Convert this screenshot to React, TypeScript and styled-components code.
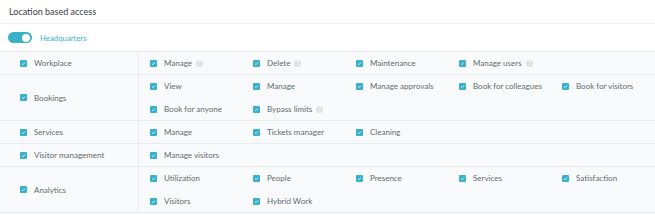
import React from "react";
import styled, { createGlobalStyle } from "styled-components";

const Global = createGlobalStyle`
  html, body { margin: 0; padding: 0; background: #ffffff; }
  body { font-family: Lato, "Open Sans", sans-serif; -webkit-font-smoothing: antialiased; }
`;

const Page = styled.div`
  width: 655px;
  height: 215px;
  overflow: hidden;
  background: #ffffff;
`;

const Header = styled.div`
  height: 23px;
  display: flex;
  align-items: center;
  padding-left: 9px;
  border-bottom: 1px solid #edf1f3;
  font-size: 9px;
  color: #3a4045;
`;

const ToggleRow = styled.div`
  height: 27px;
  display: flex;
  align-items: center;
  gap: 8px;
  padding-left: 8px;
  border-bottom: 1px solid #e6ebee;
`;

const Toggle = styled.div<{ $on: boolean }>`
  position: relative;
  width: 24px;
  height: 11px;
  border-radius: 6px;
  background: ${(p) => (p.$on ? "#3ab0c9" : "#c9d2d7")};
  &::after {
    content: "";
    position: absolute;
    top: 1.5px;
    ${(p) => (p.$on ? "right: 2px;" : "left: 2px;")}
    width: 8px;
    height: 8px;
    border-radius: 50%;
    background: #ffffff;
  }
`;

const LocationName = styled.span`
  font-size: 7.8px;
  color: #44b3cb;
`;

const Table = styled.div`
  background: #f8fafb;
`;

const Row = styled.div`
  display: grid;
  grid-template-columns: 139px 1fr;
  border-bottom: 1px solid #e6ebee;
`;

const GroupCell = styled.div`
  display: flex;
  align-items: center;
  padding-left: 20px;
  border-right: 1px solid #e6ebee;
`;

const ItemsCell = styled.div`
  display: grid;
  grid-template-columns: repeat(5, 103px);
  grid-auto-rows: 22px;
  row-gap: 1px;
  padding-left: 11px;
`;

const Item = styled.div`
  display: flex;
  align-items: center;
`;

const Box = styled.span`
  width: 7px;
  height: 7px;
  border-radius: 1px;
  background: #3ab0c9;
  display: inline-flex;
  align-items: center;
  justify-content: center;
  flex: none;
`;

const Label = styled.span`
  margin-left: 7px;
  font-size: 8px;
  color: #646b70;
  white-space: nowrap;
`;

const Help = styled.span`
  margin-left: 4px;
  width: 7px;
  height: 7px;
  border-radius: 50%;
  background: #dce1e4;
  color: #ffffff;
  font-size: 5px;
  font-weight: 700;
  display: inline-flex;
  align-items: center;
  justify-content: center;
  flex: none;
`;

const Check = () => (
  <Box>
    <svg width="5" height="5" viewBox="0 0 10 10">
      <path d="M2 5.2 L4.2 7.3 L8.2 2.8" fill="none" stroke="#ffffff" strokeWidth="1.4" />
    </svg>
  </Box>
);

type Perm = { label: string; help?: boolean };

const CheckItem = ({ label, help }: Perm) => (
  <Item>
    <Check />
    <Label>{label}</Label>
    {help && <Help>?</Help>}
  </Item>
);

const groups: { name: string; perms: Perm[] }[] = [
  {
    name: "Workplace",
    perms: [
      { label: "Manage", help: true },
      { label: "Delete", help: true },
      { label: "Maintenance" },
      { label: "Manage users", help: true },
    ],
  },
  {
    name: "Bookings",
    perms: [
      { label: "View" },
      { label: "Manage" },
      { label: "Manage approvals" },
      { label: "Book for colleagues" },
      { label: "Book for visitors" },
      { label: "Book for anyone" },
      { label: "Bypass limits", help: true },
    ],
  },
  {
    name: "Services",
    perms: [{ label: "Manage" }, { label: "Tickets manager" }, { label: "Cleaning" }],
  },
  { name: "Visitor management", perms: [{ label: "Manage visitors" }] },
  {
    name: "Analytics",
    perms: [
      { label: "Utilization" },
      { label: "People" },
      { label: "Presence" },
      { label: "Services" },
      { label: "Satisfaction" },
      { label: "Visitors" },
      { label: "Hybrid Work" },
    ],
  },
];

export default function App() {
  return (
    <Page>
      <Global />
      <Header>Location based access</Header>
      <ToggleRow>
        <Toggle $on />
        <LocationName>Headquarters</LocationName>
      </ToggleRow>
      <Table>
        {groups.map((g) => (
          <Row key={g.name}>
            <GroupCell>
              <CheckItem label={g.name} />
            </GroupCell>
            <ItemsCell>
              {g.perms.map((p) => (
                <CheckItem key={p.label} {...p} />
              ))}
            </ItemsCell>
          </Row>
        ))}
      </Table>
    </Page>
  );
}
